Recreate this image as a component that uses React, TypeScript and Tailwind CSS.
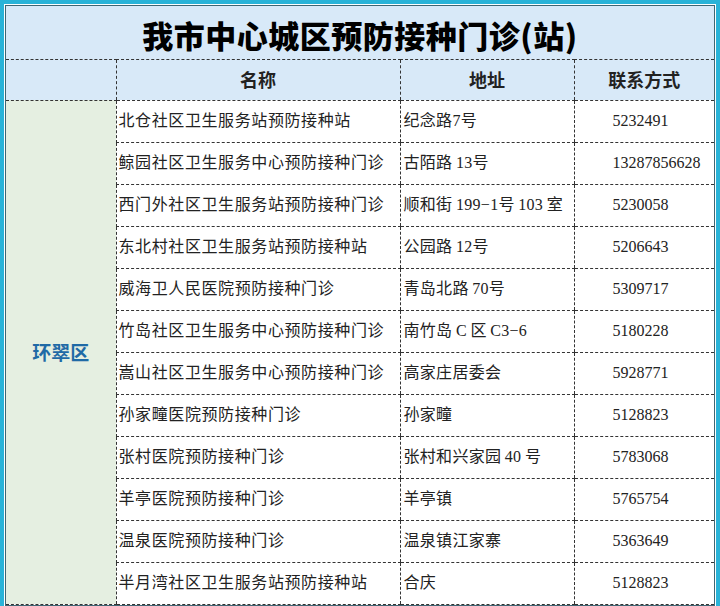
import React from 'react';

const rows: [string, string, string][] = [
  ['北仓社区卫生服务站预防接种站', '纪念路7号', '5232491'],
  ['鲸园社区卫生服务中心预防接种门诊', '古陌路\u200913号', '13287856628'],
  ['西门外社区卫生服务站预防接种门诊', '顺和街\u2009199−1号\u2009103\u2009室', '5230058'],
  ['东北村社区卫生服务站预防接种站', '公园路\u200912号', '5206643'],
  ['威海卫人民医院预防接种门诊', '青岛北路\u200970号', '5309717'],
  ['竹岛社区卫生服务中心预防接种门诊', '南竹岛\u2009C\u2009区\u2009C3−6', '5180228'],
  ['嵩山社区卫生服务中心预防接种门诊', '高家庄居委会', '5928771'],
  ['孙家疃医院预防接种门诊', '孙家疃', '5128823'],
  ['张村医院预防接种门诊', '张村和兴家园\u200940\u2009号', '5783068'],
  ['羊亭医院预防接种门诊', '羊亭镇', '5765754'],
  ['温泉医院预防接种门诊', '温泉镇江家寨', '5363649'],
  ['半月湾社区卫生服务站预防接种站', '合庆', '5128823'],
];

const cell = 'border-dashed border-[#333] border-b border-l';

export default function App() {
  return (
    <div className="w-[720px] h-[606px] overflow-hidden bg-white">
      <div className="border-4 border-[#29b3d8]">
        <div className="border border-white">
          <div className="border border-[#3f6674]">
            <table className="w-full table-fixed border-collapse text-[#222] font-['Liberation_Serif','Noto_Sans_CJK_SC',serif]">
              <colgroup>
                <col className="w-[110px]" />
                <col className="w-[284px]" />
                <col className="w-[174px]" />
                <col className="w-[140px]" />
              </colgroup>
              <tbody>
                <tr className="h-[53px] bg-[#d8e9f8]">
                  <td
                    colSpan={4}
                    className="border-b border-dashed border-[#333] pt-1 text-center text-[31px] font-black leading-none tracking-[0.5px] text-black font-['Noto_Sans_CJK_SC',sans-serif]"
                  >
                    我市中心城区预防接种门诊(站)
                  </td>
                </tr>
                <tr className="h-[41px] bg-[#d8e9f8] text-[18px] font-bold font-['Noto_Sans_CJK_SC',sans-serif]">
                  <td className="border-b border-dashed border-[#333]"></td>
                  <td className={`${cell} text-center`}>名称</td>
                  <td className={`${cell} text-center`}>地址</td>
                  <td className={`${cell} text-center`}>联系方式</td>
                </tr>
                {rows.map(([name, addr, phone], i) => (
                  <tr key={i} className="h-[42px] text-[16px]">
                    {i === 0 && (
                      <td
                        rowSpan={rows.length}
                        className="border-b border-dashed border-[#333] bg-[#e5efe1] text-center align-middle text-[19px] font-bold text-[#1f6aa6] font-['Noto_Sans_CJK_SC',sans-serif]"
                      >
                        环翠区
                      </td>
                    )}
                    <td className={`${cell} pl-[2px] whitespace-nowrap tracking-[0.6px]`}>{name}</td>
                    <td className={`${cell} pl-[3px] whitespace-nowrap tracking-[0.3px]`}>{addr}</td>
                    <td className={`${cell} pl-[38px] whitespace-nowrap`}>{phone}</td>
                  </tr>
                ))}
              </tbody>
            </table>
          </div>
        </div>
      </div>
    </div>
  );
}
